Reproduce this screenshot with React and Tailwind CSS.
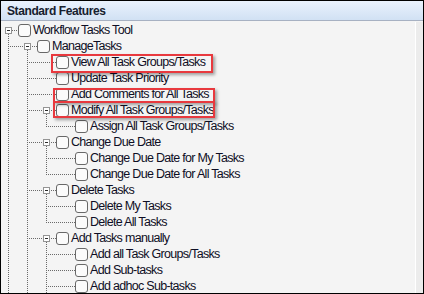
import React from "react";

const rows = [
  { L: 0, t: "Workflow Tasks Tool", exp: true },
  { L: 1, t: "ManageTasks", exp: true },
  { L: 2, t: "View All Task Groups/Tasks" },
  { L: 2, t: "Update Task Priority" },
  { L: 2, t: "Add Comments for All Tasks" },
  { L: 2, t: "Modify All Task Groups/Tasks", exp: true },
  { L: 3, t: "Assign All Task Groups/Tasks", last: true },
  { L: 2, t: "Change Due Date", exp: true },
  { L: 3, t: "Change Due Date for My Tasks" },
  { L: 3, t: "Change Due Date for All Tasks", last: true },
  { L: 2, t: "Delete Tasks", exp: true },
  { L: 3, t: "Delete My Tasks" },
  { L: 3, t: "Delete All Tasks", last: true },
  { L: 2, t: "Add Tasks manually", exp: true },
  { L: 3, t: "Add all Task Groups/Tasks" },
  { L: 3, t: "Add Sub-tasks" },
  { L: 3, t: "Add adhoc Sub-tasks" },
];

const DOT = "#6a6a6a";

function Lines({ L, exp, last }) {
  const w = 19 * (L + 1);
  const items = [];
  for (let a = 0; a <= L - 2; a++) {
    const x = 9.5 + 19 * a;
    items.push(<line key={"v" + a} x1={x} y1={0} x2={x} y2={16} />);
  }
  if (L >= 1) {
    const x = 9.5 + 19 * (L - 1);
    items.push(<line key="jt" x1={x} y1={0} x2={x} y2={last ? 9 : 16} />);
    items.push(<line key="jh" x1={9 + 19 * (L - 1)} y1={8.5} x2={w} y2={8.5} />);
  } else {
    items.push(<line key="jh0" x1={9} y1={8.5} x2={w} y2={8.5} />);
  }
  if (exp) {
    const x = 9.5 + 19 * L;
    items.push(<line key="eb" x1={x} y1={12} x2={x} y2={16} />);
  }
  return (
    <svg width={w} height={16} className="shrink-0 block" shapeRendering="crispEdges">
      <g stroke={DOT} strokeWidth="1" strokeDasharray="1 1" fill="none">
        {items}
      </g>
      {exp && (
        <g>
          <rect x={6.5 + 19 * L} y={5.5} width={6} height={6} fill="#ffffff" stroke="#949494" strokeWidth="1" />
          <line x1={8 + 19 * L} y1={8.5} x2={11 + 19 * L} y2={8.5} stroke="#2a2a2a" strokeWidth="1" />
        </g>
      )}
    </svg>
  );
}

function Row({ L, t, exp, last }) {
  return (
    <div className="flex items-center h-[16px]">
      <Lines L={L} exp={exp} last={last} />
      <div className="shrink-0 w-[13px] h-[13px] rounded-[3px] border border-[#686868] bg-[#fbfbfb]" />
      <span className="ml-[2px] whitespace-nowrap text-[12.5px] leading-[16px] tracking-[-0.7px] text-[#0e0e24]">
        {t}
      </span>
    </div>
  );
}

export default function App() {
  return (
    <div
      className="relative w-[424px] h-[294px] overflow-hidden"
      style={{ fontFamily: '"Liberation Sans", Arial, sans-serif' }}
    >
      <div className="w-[424px] h-[294px] border border-black flex flex-col bg-[#f4f4f4]">
        <div className="h-[20px] shrink-0 flex items-center pl-[6px] bg-gradient-to-b from-[#eaf2fd] to-[#d1e1f4] border-b border-[#a7b1c2]">
          <span className="text-[12px] font-bold tracking-[-0.4px] text-[#16202e]">Standard Features</span>
        </div>
        <div className="flex flex-1 min-h-0 pt-[1px]">
          <div className="flex-1 min-w-0 overflow-hidden">
            <div className="-ml-[2px] flex flex-col">
              {rows.map((r, i) => (
                <Row key={i} {...r} />
              ))}
            </div>
          </div>
          <div className="w-[8px] shrink-0 border-l border-white bg-[#ececec]" />
        </div>
      </div>
      <div className="absolute left-[51px] top-[54px] w-[162px] h-[19px] border-2 border-[#e8393e] shadow-[2px_2px_3px_rgba(0,0,0,0.35)]" />
      <div className="absolute left-[53px] top-[88px] w-[162px] h-[15px] border-2 border-[#e8393e] shadow-[2px_2px_3px_rgba(0,0,0,0.35)]" />
      <div className="absolute left-[53px] top-[101px] w-[162px] h-[17px] border-2 border-[#e8393e] shadow-[2px_2px_3px_rgba(0,0,0,0.35)]" />
    </div>
  );
}
